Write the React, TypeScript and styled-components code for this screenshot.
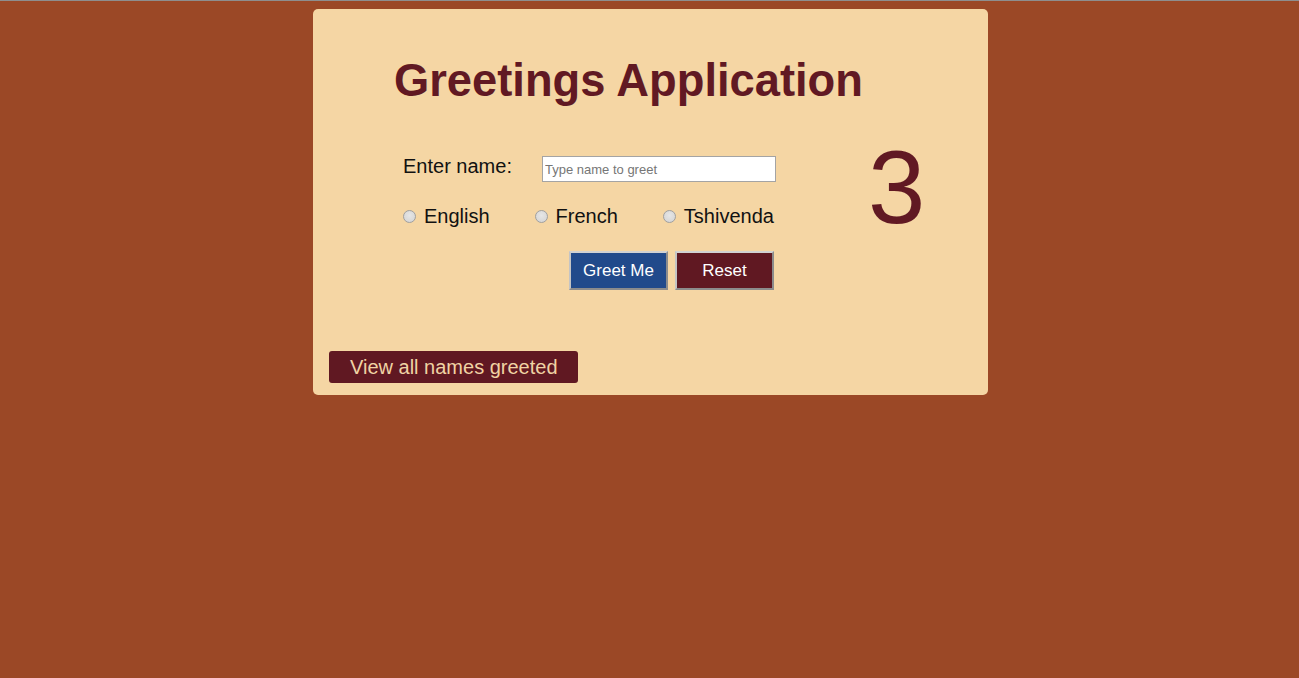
import React from "react";
import styled, { createGlobalStyle } from "styled-components";

const Global = createGlobalStyle`
  html, body {
    margin: 0;
    padding: 0;
    background: #9b4826;
    font-family: "Liberation Sans", Arial, sans-serif;
  }
  body {
    border-top: 1px solid #8e8e8e;
    min-height: 677px;
    padding-left: 2px;
  }
`;

const Card = styled.div`
  width: 675px;
  height: 386px;
  box-sizing: border-box;
  margin: 8px auto 0;
  background: #f5d6a4;
  border-radius: 5px;
  display: flex;
  flex-direction: column;
  padding: 0 16px 12px;
`;

const Title = styled.h1`
  margin: 45.5px 0 0 65px;
  font-size: 45.3px;
  line-height: 52px;
  font-weight: bold;
  color: #611923;
`;

const Main = styled.div`
  display: flex;
  align-items: flex-start;
  margin-top: 20.5px;
`;

const Form = styled.div`
  display: flex;
  flex-direction: column;
  margin: 28px 0 0 74px;
`;

const NameRow = styled.div`
  display: flex;
  align-items: flex-start;
  height: 27px;
`;

const Label = styled.label`
  width: 139px;
  font-size: 20px;
  line-height: 23px;
  color: #111;
`;

const NameInput = styled.input`
  box-sizing: border-box;
  width: 234px;
  height: 26px;
  margin-top: 1px;
  border: 1px solid #a4a4a4;
  background: #fff;
  padding: 0 2px;
  font-family: "Liberation Sans", Arial, sans-serif;
  font-size: 13px;
  &::placeholder {
    color: #767676;
  }
`;

const RadioRow = styled.div`
  display: flex;
  align-items: center;
  margin-top: 23px;
  height: 23px;
`;

const RadioGroup = styled.label`
  display: flex;
  align-items: center;
  margin-right: 45px;
  font-size: 20px;
  line-height: 23px;
  color: #111;
  &:last-child {
    margin-right: 0;
  }
`;

const Radio = styled.input`
  appearance: none;
  box-sizing: border-box;
  width: 13px;
  height: 13px;
  margin: 0 8px 0 0;
  border-radius: 50%;
  border: 1px solid #a0a0a0;
  background: radial-gradient(circle at 50% 40%, #e6e6e6 0%, #d2d2d2 100%);
`;

const ButtonRow = styled.div`
  display: flex;
  gap: 7px;
  margin: 23px 0 0 166px;
`;

const ActionButton = styled.button<{ $tone: "blue" | "red" }>`
  box-sizing: border-box;
  width: 99px;
  height: 39px;
  padding: 0;
  border-style: solid;
  border-width: 2px;
  border-color: #d2d2d2 #8c8c8c #8c8c8c #c4c4c4;
  background: ${(p) => (p.$tone === "blue" ? "#214a8b" : "#601822")};
  color: #fff;
  font-family: "Liberation Sans", Arial, sans-serif;
  font-size: 17px;
`;

const Counter = styled.div`
  margin: 1.5px 0 0 92px;
  font-size: 103px;
  line-height: normal;
  color: #611923;
`;

const Footer = styled.div`
  margin-top: auto;
  display: flex;
`;

const ViewButton = styled.button`
  height: 32px;
  padding: 0 20px 0 21px;
  border: none;
  border-radius: 3px;
  background: #601822;
  color: #f0d3a4;
  font-family: "Liberation Sans", Arial, sans-serif;
  font-size: 20px;
  line-height: 32px;
`;

export default function App() {
  return (
    <>
      <Global />
      <Card>
        <Title>Greetings Application</Title>
        <Main>
          <Form>
            <NameRow>
              <Label htmlFor="name">Enter name:</Label>
              <NameInput id="name" type="text" placeholder="Type name to greet" />
            </NameRow>
            <RadioRow>
              <RadioGroup>
                <Radio type="radio" name="lang" value="english" />
                English
              </RadioGroup>
              <RadioGroup>
                <Radio type="radio" name="lang" value="french" />
                French
              </RadioGroup>
              <RadioGroup>
                <Radio type="radio" name="lang" value="tshivenda" />
                Tshivenda
              </RadioGroup>
            </RadioRow>
            <ButtonRow>
              <ActionButton $tone="blue">Greet Me</ActionButton>
              <ActionButton $tone="red">Reset</ActionButton>
            </ButtonRow>
          </Form>
          <Counter>3</Counter>
        </Main>
        <Footer>
          <ViewButton>View all names greeted</ViewButton>
        </Footer>
      </Card>
    </>
  );
}
